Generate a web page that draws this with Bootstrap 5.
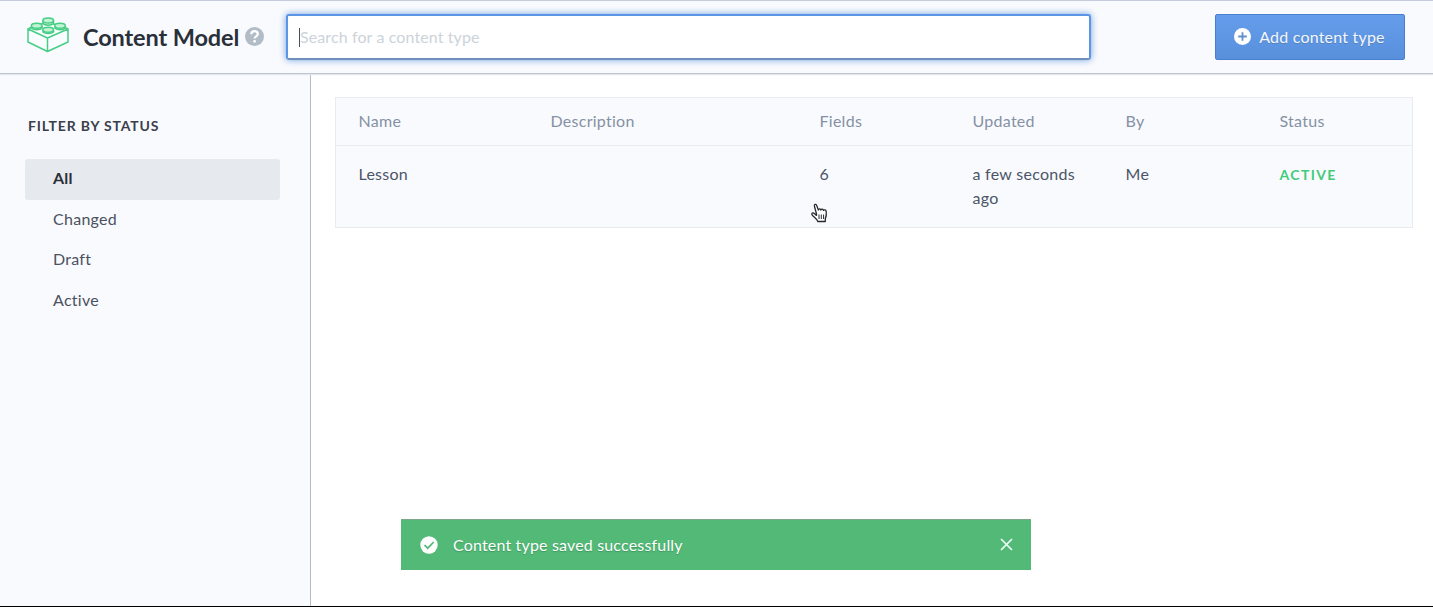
<!DOCTYPE html>
<html lang="en">
<head>
<meta charset="utf-8">
<meta name="viewport" content="width=device-width, initial-scale=1">
<title>Content Model</title>
<link href="https://cdn.jsdelivr.net/npm/bootstrap@5.3.0/dist/css/bootstrap.min.css" rel="stylesheet">
<style>
  body { font-family: Lato, "Open Sans", sans-serif; font-size: 16px; letter-spacing: .27px; color: #4b5160; background: #fff; }
  .app { height: 607px; border-top: 1px solid #c6ccdb; border-bottom: 1px solid #000; }
  .topbar { height: 73px; background: #f9fafd; border-bottom: 1px solid #bcc5d1; box-shadow: 0 1px 1px #e3e7ec; padding: 0 28.5px 1px 27px; z-index: 1; }
  .brick { margin: -4px 14px 0 0; }
  .page-title { font-size: 23.5px; font-weight: 700; letter-spacing: -.12px; color: #2a3039; line-height: 30px; width: 162px; white-space: nowrap; }
  .search-field { width: 805px; height: 46px; margin-left: 22px; border: 2px solid #5b96e6; border-bottom-color: #6f90bd; border-radius: 3px; box-shadow: 0 0 7px #6f9fe0; padding: 0 12px 1px; font-size: 16px; letter-spacing: .11px; }
  .search-field:focus { border-color: #5b96e6; box-shadow: 0 0 7px #6f9fe0; }
  .search-field::placeholder { color: #ccd3da; opacity: 1; }
  .text-caret { left: 35px; top: 14px; width: 1px; height: 19px; background: #45505c; }
  .add-btn { width: 190px; height: 46px; border: 1px solid #4a7fce; border-radius: 2px; background: linear-gradient(#659dec, #5990dc); color: #f1f7ff; font-size: 16px; letter-spacing: .2px; padding: 0; text-shadow: 0 1px 0 #5681b6; }
  .sidebar { width: 311px; background: #f9fafd; border-right: 1px solid #b6bcc6; padding: 42px 30px 0 25px; }
  .filter-title { font-size: 14px; font-weight: 700; letter-spacing: .83px; color: #3b404d; line-height: 20px; margin: 0 0 23px 3px; }
  .filter-link { height: 40.5px; line-height: 38px; padding: 0 28px; border-radius: 3px; color: #4b5160; }
  .filter-link.active { background: #e6e9ee; color: #2a3039; font-weight: 700; }
  .workspace { padding: 23px 20px 0 23.5px; }
  .types { table-layout: fixed; width: 1078px; background: #f9fafd; border: 1px solid #e9ebef; border-collapse: separate; border-spacing: 0; --bs-table-bg: transparent; margin: 0; }
  .types th, .types td { padding: 0 16px 0 23px; border: 0; line-height: 24px; }
  .types th { height: 48px; padding-bottom: 2px; font-weight: 400; color: #8591a5; border-bottom: 1px solid #e9ebef; vertical-align: middle; }
  .types td { height: 81px; padding-top: 16px; vertical-align: top; color: #4b5568; }
  .state { font-size: 14px; font-weight: 700; letter-spacing: 1.35px; color: #41cb7c; }
  .pointer { left: 811px; top: 202px; z-index: 3; }
  .notice { left: 401px; top: 518px; width: 630px; height: 51px; background: #53b977; color: #fff; border-top: 1px solid #7ca68a; padding: 0 18px 1px 19px; z-index: 2; text-shadow: 0 1px 1px #3e965d; }
  .notice-text { font-size: 16px; letter-spacing: .17px; margin-left: 15px; }
</style>
</head>
<body>
<div class="app d-flex flex-column position-relative overflow-hidden">
  <header class="topbar d-flex align-items-center flex-shrink-0 position-relative">
    <svg class="brick flex-shrink-0" width="42" height="36" viewBox="0 0 42 36" fill="none" stroke="#47ce85" stroke-width="1.5" stroke-linejoin="round">
      <path d="M1 12 21 3 41 12 V25 L20.500 34.500 1 25Z" fill="#fafdff" stroke="none"/>
      <path d="M5 10 1 12 20.500 21 41 12 37 10M1 12v13l19.500 9.500L41 25V12M20.500 21v13M13 7.500l3-1M28 7.500l-3-1"/>
      <g fill="#c3f3d5"><path d="M16 3v3.500c2 2.200 8.500 2.200 10.500 0V3M4.500 9v2.200c2 2 8.500 2 10.500 0V9M28 9v2.200c2 2 8.500 2 10 0V9M16 13v2c2 2 8.500 2 10.500 0v-2"/><ellipse cx="21.200" cy="3.500" rx="5.300" ry="2.500"/><ellipse cx="9.700" cy="8.700" rx="5.300" ry="2.500"/><ellipse cx="33" cy="8.700" rx="5.300" ry="2.500"/><ellipse cx="21.200" cy="12.800" rx="5.300" ry="2.500"/></g>
    </svg>
    <h1 class="page-title mb-0">Content Model</h1>
    <svg class="flex-shrink-0" width="19" height="19" viewBox="0 0 19 19"><circle cx="9.500" cy="9.500" r="9.500" fill="#b1bcc6"/><path d="M6.300 7.200c.1-4.200 6.500-4 6.500-.2 0 2.500-3.200 2.300-3.200 4.600" fill="none" stroke="#fff" stroke-width="2.200"/><circle cx="9.600" cy="14.300" r="1.350" fill="#fff"/></svg>
    <div class="position-relative flex-shrink-0">
      <input class="form-control search-field" type="text" placeholder="Search for a content type" aria-label="Search for a content type">
      <span class="text-caret position-absolute"></span>
    </div>
    <button class="btn add-btn ms-auto d-flex align-items-center justify-content-center" type="button">
      <svg class="me-2" width="17" height="17" viewBox="0 0 17 17"><circle cx="8.500" cy="8.500" r="8.500" fill="#fff"/><path d="M8.500 4.200v8.600M4.200 8.500h8.600" stroke="#628fce" stroke-width="1.800"/></svg>
      <span class="add-label">Add content type</span>
    </button>
  </header>
  <div class="d-flex flex-grow-1">
    <aside class="sidebar flex-shrink-0">
      <h2 class="filter-title">FILTER BY STATUS</h2>
      <nav class="nav flex-column">
        <a class="filter-link active text-decoration-none" href="#">All</a>
        <a class="filter-link text-decoration-none" href="#">Changed</a>
        <a class="filter-link text-decoration-none" href="#">Draft</a>
        <a class="filter-link text-decoration-none" href="#">Active</a>
      </nav>
    </aside>
    <main class="workspace flex-grow-1">
      <table class="table types">
        <colgroup><col style="width:192px"><col style="width:269px"><col style="width:153px"><col style="width:153px"><col style="width:154px"><col></colgroup>
        <thead><tr><th>Name</th><th>Description</th><th>Fields</th><th>Updated</th><th>By</th><th>Status</th></tr></thead>
        <tbody><tr><td>Lesson</td><td></td><td>6</td><td>a few seconds ago</td><td>Me</td><td><span class="state">ACTIVE</span></td></tr></tbody>
      </table>
    </main>
  </div>
  <svg class="pointer position-absolute" width="18" height="20" viewBox="0 0 18 20" fill="#fff" stroke="#25282d" stroke-width="1.300" stroke-linejoin="round"><path d="M5.500 11 3.500 3.500C2.800 1.200 5 .5 5.700 2.500L7.400 7c.4-1.500 2.200-1.300 2.500 0 .6-1.200 2.300-1 2.600.3.800-.9 2.500-.5 2.700 1.200.3 2.400.3 4.800-.9 7.200V18.500H6.800C6 15.500 1.500 13.500.8 11.200c0-1.500 1.500-1.700 2.500-.8l2.200 2Z"/><path d="M8 11.500v4.500M10.300 11.500v4.500M12.600 11.500v4.500" stroke-width="1"/></svg>
  <div class="notice position-absolute d-flex align-items-center" role="status">
    <svg width="18" height="18" viewBox="0 0 18 18"><circle cx="9" cy="9" r="8.700" fill="#fff"/><path d="m4.500 9 3.200 3.200 6-6.200" fill="none" stroke="#53b977" stroke-width="1.700"/></svg>
    <span class="notice-text">Content type saved successfully</span>
    <svg class="ms-auto" width="13" height="13" viewBox="0 0 13 13"><path d="m1 1 11 11M12 1 1 12" stroke="#edfff4" stroke-width="1.700"/></svg>
  </div>
</div>
<script src="https://cdn.jsdelivr.net/npm/bootstrap@5.3.0/dist/js/bootstrap.bundle.min.js"></script>
</body>
</html>
